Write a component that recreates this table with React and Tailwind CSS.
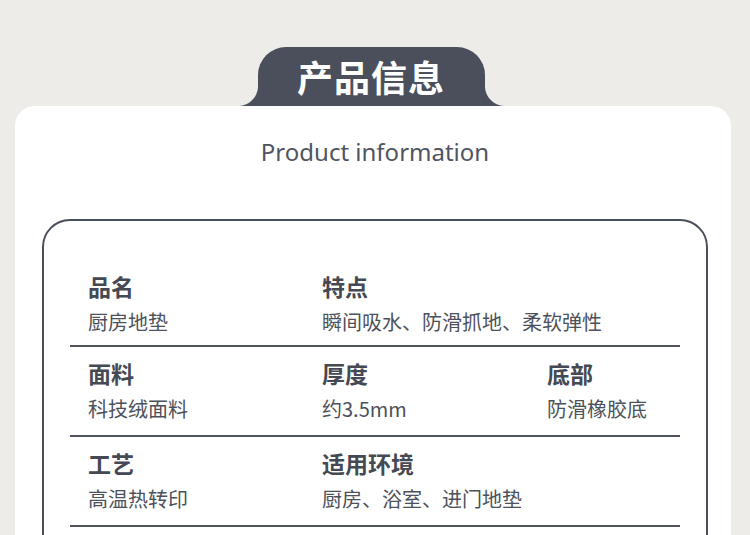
import React from "react";

const cjk = { fontFamily: '"Noto Sans CJK SC", "Noto Sans", sans-serif' };

function Row({ first, items }) {
  return (
    <div
      className={
        "border-b-2 border-[#4f535c] px-[18px] " +
        (first ? "pt-[50px] pb-[8px]" : "pt-[11px] pb-[11px]")
      }
    >
      <div className="grid grid-cols-[234px_225px_1fr]">
        {items.map((it, i) => (
          <div
            key={i}
            className={
              "flex flex-col whitespace-nowrap " +
              (items.length === 2 && i === 1 ? "col-span-2" : "")
            }
          >
            <div className="text-[23px] leading-[30px] font-bold text-[#454953]">{it[0]}</div>
            <div className="mt-[6px] text-[20px] leading-[30px] text-[#4d515b]">{it[1]}</div>
          </div>
        ))}
      </div>
    </div>
  );
}

export default function App() {
  return (
    <div className="w-[750px] h-[535px] overflow-hidden bg-[#edece8] pt-[47px]" style={cjk}>
      <div className="flex justify-center pr-[8px]">
        <div className="relative w-[227px] h-[59px] bg-[#4a4f5b] rounded-t-[28px] flex items-center justify-center">
          <div className="absolute left-[-20px] bottom-0 w-[20px] h-[20px] bg-[radial-gradient(circle_at_0_0,transparent_19.5px,#4a4f5b_20.5px)]" />
          <div className="absolute right-[-20px] bottom-0 w-[20px] h-[20px] bg-[radial-gradient(circle_at_100%_0,transparent_19.5px,#4a4f5b_20.5px)]" />
          <span className="text-white font-bold text-[36px] leading-none tracking-[1px] mt-[-2px]">产品信息</span>
        </div>
      </div>
      <div className="ml-[15px] w-[716px] bg-white rounded-[20px] pt-[30px] h-[500px]">
        <div
          className="text-center text-[24px] leading-[32px] text-[#50555f] pl-[4px]"
          style={{ fontFamily: '"Noto Sans", "Open Sans", sans-serif' }}
        >
          Product information
        </div>
        <div className="mt-[51px] ml-[27px] w-[666px] border-2 border-[#4a4f5b] rounded-[28px] px-[26px] h-[400px]">
          <Row first items={[["品名", "厨房地垫"], ["特点", "瞬间吸水、防滑抓地、柔软弹性"]]} />
          <Row items={[["面料", "科技绒面料"], ["厚度", "约3.5mm"], ["底部", "防滑橡胶底"]]} />
          <Row items={[["工艺", "高温热转印"], ["适用环境", "厨房、浴室、进门地垫"]]} />
        </div>
      </div>
    </div>
  );
}
